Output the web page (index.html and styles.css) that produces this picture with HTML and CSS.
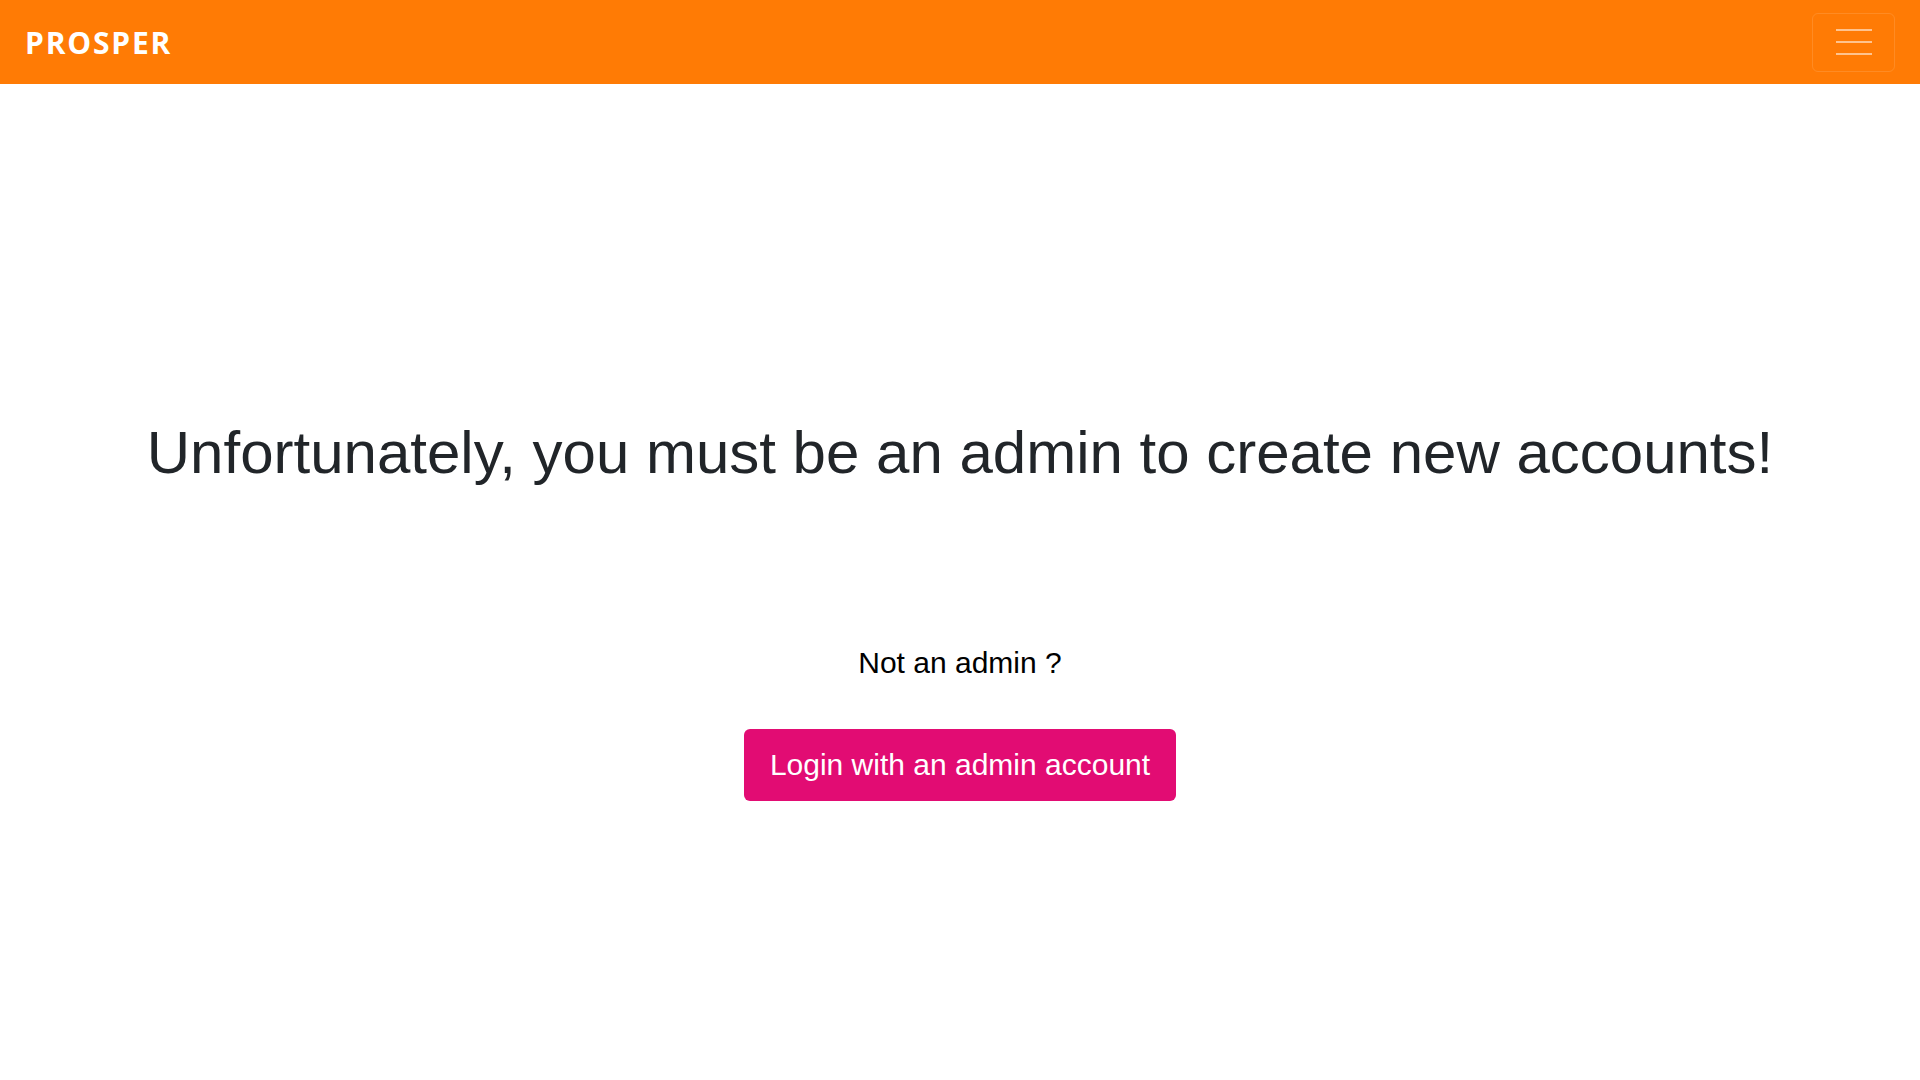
FILE: index.html
```html
<!DOCTYPE html>
<html lang="en">
<head>
<meta charset="utf-8">
<title>Prosper</title>
<link rel="stylesheet" href="styles.css">
</head>
<body>
<nav class="navbar">
  <a class="brand" href="#">PROSPER</a>
  <button class="toggler" aria-label="Toggle navigation">
    <span class="bar"></span><span class="bar"></span><span class="bar"></span>
  </button>
</nav>
<main class="content">
  <h1 class="title">Unfortunately, you must be an admin to create new accounts!</h1>
  <p class="hint">Not an admin ?</p>
  <a class="btn" href="#">Login with an admin account</a>
</main>
</body>
</html>
```
FILE: styles.css
```css
* { box-sizing: border-box; }
html, body { margin: 0; padding: 0; }
body {
  font-family: "Liberation Sans", Arial, sans-serif;
  background: #fff;
  color: #212529;
}
.navbar {
  height: 84px;
  background: #ff7b05;
  display: flex;
  align-items: center;
  justify-content: space-between;
  padding: 0 25px 0 25px;
}
.brand {
  font-family: "Open Sans", sans-serif;
  font-weight: 700;
  font-size: 30px;
  color: #fff;
  text-decoration: none;
  letter-spacing: 1.8px;
}
.toggler {
  width: 83px;
  height: 59px;
  background: transparent;
  border: 1px solid rgba(255,255,255,0.12);
  border-radius: 6px;
  display: flex;
  flex-direction: column;
  align-items: center;
  justify-content: center;
  gap: 10px;
  padding: 0;
}
.bar {
  display: block;
  width: 36px;
  height: 2px;
  background: rgba(255,255,255,0.55);
}
.content {
  display: flex;
  flex-direction: column;
  align-items: center;
  padding-top: 333px;
}
.title {
  margin: 0;
  font-weight: 400;
  font-size: 60px;
  line-height: 1.2;
  color: #212529;
}
.hint {
  margin: 156px 0 0 0;
  font-size: 30px;
  color: #000;
  line-height: 1.2;
}
.btn {
  margin-top: 48px;
  display: inline-flex;
  align-items: center;
  justify-content: center;
  width: 432px;
  height: 72px;
  background: #e20c73;
  color: #fff;
  font-size: 30px;
  text-decoration: none;
  border-radius: 6px;
}
```
